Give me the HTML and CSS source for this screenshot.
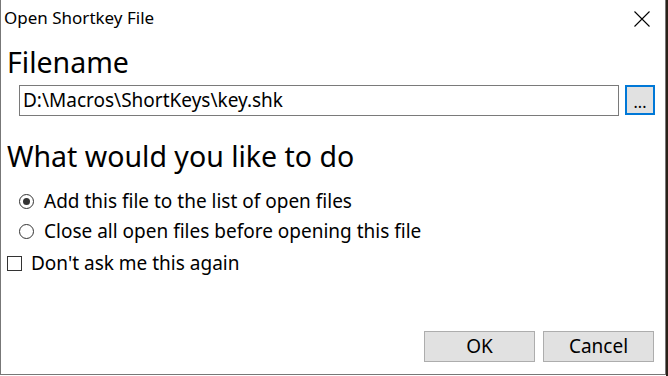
FILE: index.html
```html
<!DOCTYPE html>
<html>
<head>
<meta charset="utf-8">
<link rel="stylesheet" href="styles.css">
</head>
<body>
<div class="screen">
  <div class="window">
    <div class="titlebar">
      <span class="title">Open Shortkey File</span>
      <span class="close">
        <svg width="16" height="16" viewBox="0 0 16 16"><path d="M0.5 0.5 L15.5 15.5 M15.5 0.5 L0.5 15.5" stroke="#000" stroke-width="1.1" fill="none"/></svg>
      </span>
    </div>
    <div class="content">
      <h1 class="heading">Filename</h1>
      <div class="file-row">
        <div class="input">D:\Macros\ShortKeys\key.shk</div>
        <div class="browse">...</div>
      </div>
      <h2 class="heading heading-2">What would you like to do</h2>
      <div class="options">
        <div class="option"><span class="radio checked"></span><span>Add this file to the list of open files</span></div>
        <div class="option"><span class="radio"></span><span>Close all open files before opening this file</span></div>
      </div>
      <div class="check-row"><span class="checkbox"></span><span>Don't ask me this again</span></div>
      <div class="spacer"></div>
      <div class="buttons">
        <div class="btn">OK</div>
        <div class="btn">Cancel</div>
      </div>
    </div>
  </div>
  <div class="backdrop"></div>
</div>
</body>
</html>
```
FILE: styles.css
```css
html, body {
  margin: 0;
  padding: 0;
  background: #ffffff;
}
body {
  font-family: "Noto Sans", "Open Sans", sans-serif;
  font-size: 19px;
  color: #000;
}
.screen {
  display: flex;
  width: 668px;
  height: 376px;
}
.window {
  width: 664px;
  height: 374px;
  border-left: 1px solid #777;
  border-right: 1px solid #777;
  border-bottom: 1px solid #777;
  display: flex;
  flex-direction: column;
  background: #fff;
}
.backdrop {
  width: 2px;
  height: 376px;
  background: #2a2119;
}
.titlebar {
  height: 44px;
  display: flex;
  justify-content: space-between;
  align-items: flex-start;
  box-sizing: border-box;
  padding: 6px 0 0 3px;
}
.title {
  line-height: 24px;
  font-size: 17px;
}
.close {
  margin: 5px 15px 0 0;
  width: 16px;
  height: 16px;
  display: flex;
}
.content {
  flex: 1;
  display: flex;
  flex-direction: column;
  padding: 0 10px 12px 6px;
}
.heading {
  margin: 0;
  font-size: 28.5px;
  font-weight: normal;
  line-height: 36px;
}
.heading-2 {
  margin-top: 22px;
}
.file-row {
  display: flex;
  align-items: flex-start;
  margin-top: 5px;
  padding-left: 12px;
}
.input {
  width: 596px;
  height: 29px;
  border: 1px solid #7a7a7a;
  line-height: 29px;
  padding-left: 3px;
  box-sizing: content-box;
  white-space: nowrap;
}
.browse {
  margin-left: 6px;
  width: 26px;
  height: 26px;
  border: 2px solid #0078d7;
  background: #e1e1e1;
  text-align: center;
  line-height: 30px;
  font-size: 16px;
}
.options {
  margin-top: 12px;
  padding-left: 12px;
  display: flex;
  flex-direction: column;
}
.option, .check-row {
  display: flex;
  align-items: center;
  height: 30px;
  line-height: 30px;
}
.radio {
  width: 13px;
  height: 13px;
  border: 1px solid #333;
  border-radius: 50%;
  margin-right: 10px;
  display: flex;
  align-items: center;
  justify-content: center;
  flex: none;
}
.radio.checked::after {
  content: "";
  width: 7px;
  height: 7px;
  border-radius: 50%;
  background: #333;
}
.check-row {
  margin-top: 2px;
}
.checkbox {
  width: 13px;
  height: 13px;
  border: 1px solid #333;
  margin-right: 9px;
  flex: none;
}
.spacer {
  flex: 1;
}
.buttons {
  display: flex;
  justify-content: flex-end;
  gap: 8px;
  padding-right: 1px;
}
.btn {
  width: 109px;
  height: 29px;
  border: 1px solid #adadad;
  background: #e1e1e1;
  text-align: center;
  line-height: 29px;
}
```
